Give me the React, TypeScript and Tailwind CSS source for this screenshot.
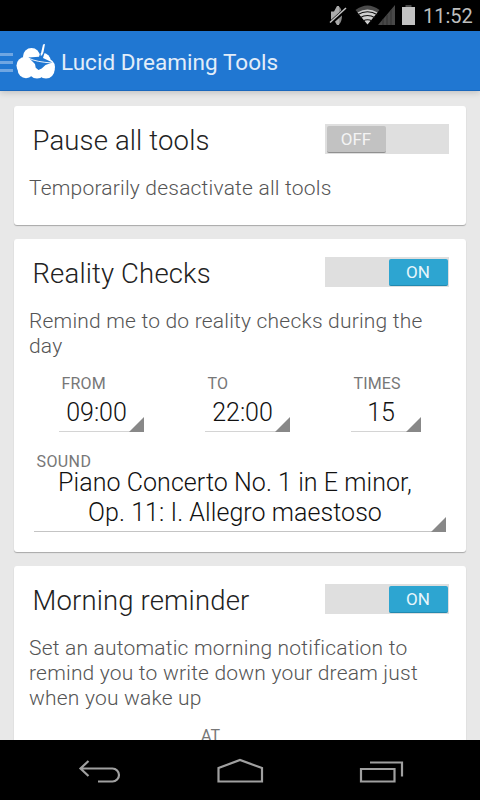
import type { ReactNode } from 'react'
import clsx from 'clsx'

function StatusBar() {
    return (
        <div className="h-[31px] shrink-0 bg-black flex items-center justify-end">
            <svg width="76" height="31" viewBox="0 0 76 31" className="mr-2">
                <path d="M7 11.500h3l3-5.500h2v19h-2l-3-5H7z" fill="#aaa" />
                <path d="M15 6.500c4 3 4 14.500 0 18z" fill="#8c8c8c" />
                <path d="M6 23.500L21.500 9.500" stroke="#000" strokeWidth="4" />
                <path d="M6 22.500L22 8" stroke="#c4c4c4" strokeWidth="1.500" />
                <path d="M43.500 24L31.500 10q12-9 24 0z" fill="#4a4a4a" />
                <path d="M43.500 24.500L33.500 12.500q10-6 20 0z" fill="#d0d0d0" />
                <path d="M33.500 14.800q10-6 20 0M36 17.800q7.500-4.500 15 0M39 21q4.500-2.500 9 0" stroke="#111" strokeWidth="1.100" fill="none" />
                <path d="M54 25L71 5v20z" fill="#484848" />
                <path d="M59 19v6M63 15v10M67 10v15" stroke="#303030" strokeWidth="1" />
            </svg>
            <svg width="13" height="31" viewBox="0 0 13 31" className="mr-2 -ml-[6px]">
                <path d="M3.500 5h6v2h-6z" fill="#4a4a4a" />
                <path d="M0 7h13v18H0z" fill="#c2c2c2" />
            </svg>
            <span className="w-[50px] mr-[7px] pt-[2px] text-[20px] leading-[31px] text-[#bebebe]">11:52</span>
        </div>
    )
}

function Logo() {
    return (
        <svg width="41" height="37" viewBox="0 0 41 37">
            <g fill="#fff">
                <circle cx="16.500" cy="14.500" r="8.500" />
                <circle cx="10" cy="23.500" r="8.500" />
                <circle cx="11" cy="28" r="8.300" />
                <circle cx="22" cy="28" r="8.600" />
                <circle cx="31" cy="28" r="8.600" />
                <circle cx="31.500" cy="25" r="8.500" />
                <circle cx="28" cy="18.500" r="7.500" />
            </g>
            <path d="M13.500 15.500L24 14.800 25 11.500 29.500 11 28 16 37.500 20.500 30.500 23 26.700 26.500 23.500 28 20.700 25.700 20 22 16.500 18.500z" fill="#2077d2" />
            <path d="M14 16.300Q21 20 37.500 21" stroke="#fff" strokeWidth="0.900" fill="none" />
            <path d="M25.500 13.500L28 2.500 30 2 28.500 10 27 13.500z" fill="#fff" />
        </svg>
    )
}

function ActionBar() {
    return (
        <header className="relative z-10 h-[60px] shrink-0 bg-[#2077d2] border-b border-[#1a68bd] shadow-[0_2px_6px_rgba(0,0,0,0.16)] flex items-center">
            <div className="w-[13px] pt-[3px] flex flex-col gap-[5px]">
                <div className="h-[3px] bg-[#6fa6e2]" />
                <div className="h-[3px] bg-[#6fa6e2]" />
                <div className="h-[3px] bg-[#6fa6e2]" />
            </div>
            <div className="w-12 pl-0.5">
                <Logo />
            </div>
            <h1 className="pt-[3px] text-[22.500px] leading-[30px] tracking-[0.040px] text-[#e2edf9] whitespace-nowrap">Lucid Dreaming Tools</h1>
        </header>
    )
}

function Toggle({ on }: { on: boolean }) {
    return (
        <div className={clsx('w-[124px] h-[30px] bg-[#dfdfdf] flex items-center px-[1.500px]', on && 'justify-end')}>
            <div
                className={clsx(
                    'w-[59px] h-[27px] rounded-[2px] border-b text-[17px] leading-[27px] text-center',
                    on ? 'bg-[#2da5d1] border-[#2189b0] text-[#e8f5fb]' : 'bg-[#c2c2c2] border-[#909090] text-[#f4f4f4]'
                )}
            >
                {on ? 'ON' : 'OFF'}
            </div>
        </div>
    )
}

type CardProps = {
    title: string
    on: boolean
    className: string
    children: ReactNode
}

function Card({ title, on, className, children }: CardProps) {
    return (
        <section className={clsx('shrink-0 bg-white rounded-[3px] shadow-[0_1px_1px_rgba(0,0,0,0.28)]', className)}>
            <div className="h-[70px] pl-[18.500px] pr-[17px] pt-[18px] flex items-start justify-between">
                <h2 className="text-[27.500px] leading-[33px] tracking-[0.150px] font-light text-[#222] whitespace-nowrap">{title}</h2>
                <Toggle on={on} />
            </div>
            {children}
        </section>
    )
}

function Description({ lines }: { lines: string[] }) {
    return (
        <p className="pl-[15px] text-[21px] leading-[25px] tracking-[0.200px] font-light text-[#555]">
            {lines.map((line) => (
                <span key={line} className="block whitespace-nowrap">{line}</span>
            ))}
        </p>
    )
}

function Corner() {
    return (
        <svg width="15" height="15" viewBox="0 0 15 15" className="absolute right-0 -bottom-px">
            <path d="M15 0v15H0z" fill="#888" />
        </svg>
    )
}

function Picker({ label, value, className }: { label: string; value: string; className: string }) {
    return (
        <div className={className}>
            <div className="pl-[2.500px] text-[16px] leading-[18px] tracking-[0.150px] text-[#777]">{label}</div>
            <div className="relative h-[39px] pr-[10px] border-b border-[#d4d4d4] text-[25px] leading-[40px] font-light text-[#111] text-center">
                {value}
                <Corner />
            </div>
        </div>
    )
}

function NavBar() {
    return (
        <nav className="h-[60px] shrink-0 bg-black">
            <svg width="480" height="60" viewBox="0 0 480 60" fill="none" stroke="#a0a0a0" strokeWidth="2.200">
                <path d="M98 41.500h14.500a6.500 6.500 0 0 0 0-13H81M88.500 21L80.500 28.500 88.500 36" />
                <path d="M218.500 41.500V28L240 20l22 8v13.500z" />
                <path d="M361 29h33.500v12.500H361zM370 22.500h32v14" />
            </svg>
        </nav>
    )
}

export default function App() {
    return (
        <div className="w-full h-[800px] overflow-hidden flex flex-col bg-[#e8e8e8] font-['Roboto',sans-serif]">
            <StatusBar />
            <ActionBar />
            <main className="flex-1 min-h-0 overflow-hidden px-[14px] pt-[15px] flex flex-col gap-[14px]">
                <Card title="Pause all tools" on={false} className="h-[119px]">
                    <Description lines={['Temporarily desactivate all tools']} />
                </Card>
                <Card title="Reality Checks" on className="h-[313px]">
                    <Description lines={['Remind me to do reality checks during the', 'day']} />
                    <div className="pl-[45px] pr-[45px] pt-[16px] flex justify-between">
                        <Picker label="FROM" value="09:00" className="w-[85px]" />
                        <Picker label="TO" value="22:00" className="w-[85px]" />
                        <Picker label="TIMES" value="15" className="w-[70px]" />
                    </div>
                    <div className="pt-[21px] pl-[22.500px] text-[16px] leading-[18px] tracking-[0.400px] text-[#777]">SOUND</div>
                    <div className="relative ml-5 mr-5 -mt-[4px] h-[65px] pt-px pr-[10px] border-b border-[#c4c4c4] text-[25px] leading-[30px] tracking-[0.060px] font-light text-[#111] text-center">
                        <div className="whitespace-nowrap">Piano Concerto No. 1 in E minor,</div>
                        <div className="whitespace-nowrap">Op. 11: I. Allegro maestoso</div>
                        <Corner />
                    </div>
                </Card>
                <Card title="Morning reminder" on className="h-[313px]">
                    <Description
                        lines={['Set an automatic morning notification to', 'remind you to write down your dream just', 'when you wake up']}
                    />
                    <div className="pt-[16px] pl-[187px] text-[16px] leading-[18px] text-[#777]">AT</div>
                </Card>
            </main>
            <NavBar />
        </div>
    )
}
